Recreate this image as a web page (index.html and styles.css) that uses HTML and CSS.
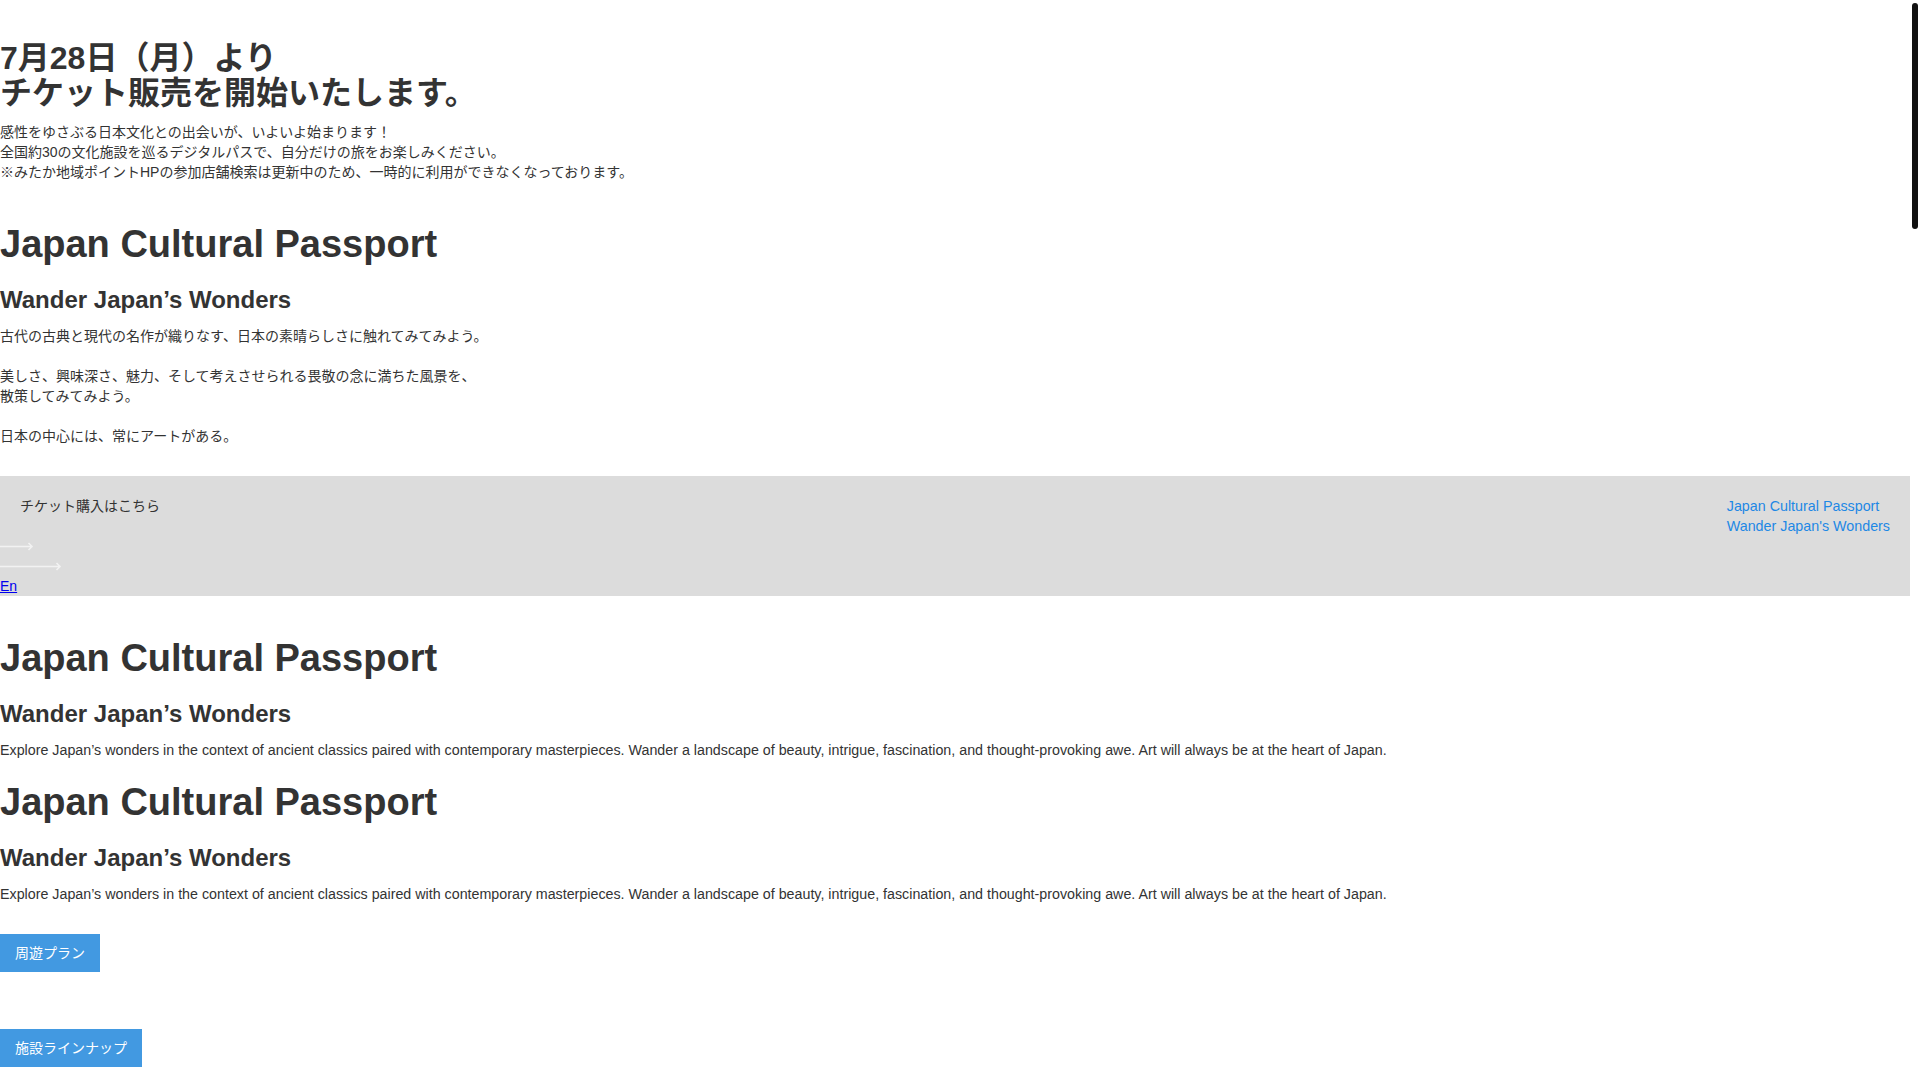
FILE: index.html
```html
<!DOCTYPE html>
<html lang="ja">
<head>
<meta charset="utf-8">
<title>Japan Cultural Passport</title>
<link rel="stylesheet" href="styles.css">
</head>
<body>
<section class="intro">
  <h1 class="lead">7月28日（月）より<br>チケット販売を開始いたします。</h1>
  <p class="text">感性をゆさぶる日本文化との出会いが、いよいよ始まります！<br>全国約30の文化施設を巡るデジタルパスで、自分だけの旅をお楽しみください。<br>※みたか地域ポイントHPの参加店舗検索は更新中のため、一時的に利用ができなくなっております。</p>
</section>

<section class="about about-jp">
  <h1 class="title">Japan Cultural Passport</h1>
  <h2 class="subtitle">Wander Japan’s Wonders</h2>
  <p class="text">古代の古典と現代の名作が織りなす、日本の素晴らしさに触れてみてみよう。<br><br>美しさ、興味深さ、魅力、そして考えさせられる畏敬の念に満ちた風景を、<br>散策してみてみよう。<br><br>日本の中心には、常にアートがある。</p>
</section>

<header class="band">
  <div class="band-row">
    <a class="ticket" href="#">チケット購入はこちら</a>
    <nav class="band-nav">
      <a href="#">Japan Cultural Passport</a>
      <a href="#">Wander Japan's Wonders</a>
    </nav>
  </div>
  <div class="arrow">
    <svg width="34" height="20" viewBox="0 0 34 20"><path d="M0 10.5H32M28.5 7l3.5 3.5-3.5 3.5" fill="none" stroke="#f2f2f2" stroke-width="1.6"/></svg>
  </div>
  <div class="arrow">
    <svg width="62" height="20" viewBox="0 0 62 20"><path d="M0 10.5H60M56.5 7l3.5 3.5-3.5 3.5" fill="none" stroke="#f2f2f2" stroke-width="1.6"/></svg>
  </div>
  <a class="lang" href="#">En</a>
</header>

<section class="about-en">
  <div class="about">
    <h1 class="title">Japan Cultural Passport</h1>
    <h2 class="subtitle">Wander Japan’s Wonders</h2>
    <p class="text text-en">Explore Japan’s wonders in the context of ancient classics paired with contemporary masterpieces. Wander a landscape of beauty, intrigue, fascination, and thought-provoking awe. Art will always be at the heart of Japan.</p>
  </div>
  <div class="about">
    <h1 class="title">Japan Cultural Passport</h1>
    <h2 class="subtitle">Wander Japan’s Wonders</h2>
    <p class="text text-en">Explore Japan’s wonders in the context of ancient classics paired with contemporary masterpieces. Wander a landscape of beauty, intrigue, fascination, and thought-provoking awe. Art will always be at the heart of Japan.</p>
  </div>
</section>

<div class="btn-wrap first"><a class="btn" href="#">周遊プラン</a></div>
<div class="btn-wrap second"><a class="btn" href="#">施設ラインナップ</a></div>

<div class="scroll-thumb" aria-hidden="true"></div>
</body>
</html>
```

FILE: styles.css
```css
html {
  background: #fff;
  overflow: hidden;
}
body {
  margin: 0 10px 0 0;
  font-family: "Liberation Sans", "Noto Sans CJK JP", sans-serif;
  color: #333;
  font-size: 14px;
  line-height: 20px;
}
.scroll-thumb {
  position: fixed;
  top: 3px;
  right: 2px;
  width: 6px;
  height: 226px;
  border-radius: 3px;
  background: #111;
}
.lead {
  margin: 41px 0 11px;
  font-size: 32px;
  line-height: 35px;
  font-weight: bold;
}
.text {
  margin: 0;
  font-size: 14px;
  line-height: 20px;
}
.text-en {
  font-size: 14.28px;
}
.about-jp {
  padding: 20px 0 30px;
}
.title {
  margin: 20px 0;
  font-size: 38px;
  line-height: 44px;
  font-weight: bold;
}
.subtitle {
  margin: 20px 0 12px;
  font-size: 24px;
  line-height: 28px;
  font-weight: bold;
}
.band {
  background: #dcdcdc;
  display: flex;
  flex-direction: column;
  align-items: flex-start;
}
.band-row {
  align-self: stretch;
  display: flex;
  justify-content: space-between;
  align-items: flex-start;
  height: 60px;
}
.ticket {
  padding: 20px;
  color: #333;
  text-decoration: none;
}
.band-nav {
  display: flex;
  flex-direction: column;
  padding: 20px 20px 0;
}
.band-nav a {
  color: #1e88e5;
  text-decoration: none;
  font-size: 14.3px;
  line-height: 20px;
}
.arrow {
  height: 20px;
  display: flex;
}
.lang {
  color: #0000ee;
  text-decoration: underline;
  line-height: 20px;
}
.about-en {
  padding-top: 20px;
}
.btn-wrap.first {
  margin-top: 30px;
}
.btn-wrap.second {
  margin-top: 57px;
}
.btn {
  display: inline-block;
  background: #4299e1;
  color: #fff;
  text-decoration: none;
  padding: 9px 15px;
  line-height: 20px;
}
```
